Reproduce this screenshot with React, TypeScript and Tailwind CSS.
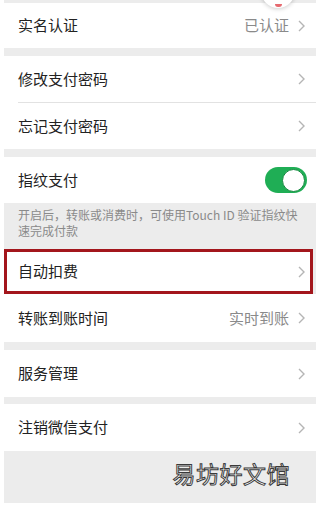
import React from "react";

const font = { fontFamily: '"Noto Sans CJK SC", "Noto Sans", sans-serif' };

function Chevron() {
  return (
    <svg width="7" height="12" viewBox="0 0 7 12" className="shrink-0">
      <polyline points="1,1 6,6 1,11" fill="none" stroke="#b5b5b5" strokeWidth="1.4" />
    </svg>
  );
}

function Row({ label, value, h }: { label: string; value?: string; h: string }) {
  return (
    <div className={`flex items-center justify-between bg-white pl-[14px] pr-[11px] ${h}`}>
      <span className="text-[15px] text-[#222]">{label}</span>
      <div className="flex items-center gap-[9px]">
        {value && <span className="text-[15px] text-[#8a8a8a]">{value}</span>}
        <Chevron />
      </div>
    </div>
  );
}

export default function App() {
  return (
    <div className="w-[319px] h-[505px] bg-white pl-[4px] pr-[3px] pb-[2px] overflow-hidden" style={font}>
      <div className="relative flex flex-col h-full bg-[#ececec] pt-[3px]">
        {/* floating button peeking from the top */}
        <div className="absolute -top-[26px] left-[257px] w-[34px] h-[34px] rounded-full bg-white shadow-[0_1px_4px_rgba(0,0,0,0.2)] z-10 flex items-end justify-center pb-[1px]">
          <div className="w-[7px] h-[3px] rounded-b-full bg-[#e66a70]" />
        </div>

        <Row label="实名认证" value="已认证" h="h-[45px]" />
        <div className="h-[8px] shrink-0" />
        <Row label="修改支付密码" h="h-[46px]" />
        <div className="h-px bg-white pl-[14px]">
          <div className="h-px bg-[#e2e2e2]" />
        </div>
        <Row label="忘记支付密码" h="h-[46px]" />
        <div className="h-[8px] shrink-0" />

        <div className="flex items-center justify-between bg-white pl-[14px] pr-[9px] h-[46px]">
          <span className="text-[15px] text-[#222]">指纹支付</span>
          <div className="w-[42px] h-[26px] rounded-full bg-[#1fae55] flex items-center justify-end pr-[2px]">
            <div className="w-[23px] h-[23px] rounded-full bg-white border border-[#15893f]" />
          </div>
        </div>
        <div className="h-[46px] pl-[14px] pt-[4px] text-[12px] leading-[16px] text-[#8a8a8a]">
          <div>开启后，转账或消费时，可使用Touch ID 验证指纹快</div>
          <div>速完成付款</div>
        </div>

        <div className="flex items-center justify-between bg-white h-[45px] mr-[3px] border-[3px] border-[#a3161c] pl-[11px] pr-[5px]">
          <span className="text-[15px] text-[#222]">自动扣费</span>
          <Chevron />
        </div>
        <Row label="转账到账时间" value="实时到账" h="h-[48px]" />
        <div className="h-[8px] shrink-0" />
        <Row label="服务管理" h="h-[47px]" />
        <div className="h-[7px] shrink-0" />
        <Row label="注销微信支付" h="h-[47px]" />

        <div className="flex-1 flex justify-end pr-[26px] pt-[9px]">
          <span className="text-[23px] leading-[26px] text-white [-webkit-text-stroke:1px_#3a3a3a] tracking-[0.5px]">
            易坊好文馆
          </span>
        </div>
      </div>
    </div>
  );
}
